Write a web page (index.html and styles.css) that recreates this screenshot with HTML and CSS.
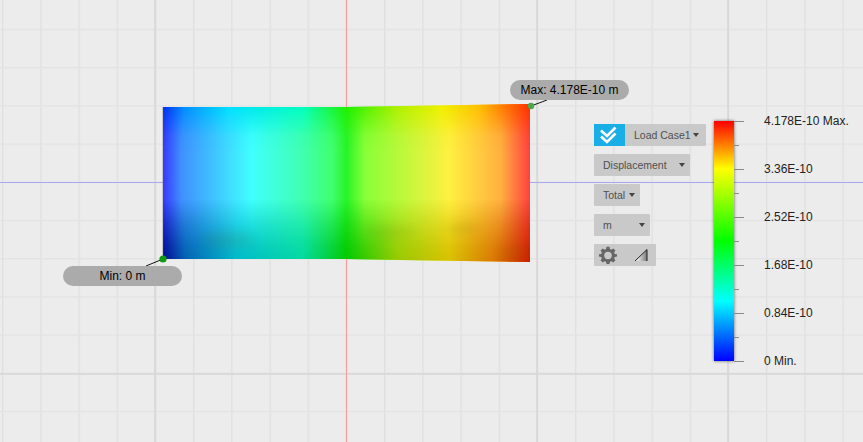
FILE: index.html
```html
<!DOCTYPE html>
<html lang="en">
<head>
<meta charset="utf-8">
<title>Displacement result</title>
<link rel="stylesheet" href="styles.css">
</head>
<body>
<main class="stage">
  <svg class="scene" width="863" height="442" viewBox="0 0 863 442" xmlns="http://www.w3.org/2000/svg">
    <defs>
      <pattern id="gv" x="2" y="0" width="38.2" height="442" patternUnits="userSpaceOnUse">
        <rect x="0" y="0" width="1.4" height="442" fill="#e0e0e0"/>
      </pattern>
      <pattern id="gh" x="0" y="28.800" width="863" height="38.2" patternUnits="userSpaceOnUse">
        <rect x="0" y="0" width="863" height="1.4" fill="#e3e3e3"/>
      </pattern>
      <linearGradient id="mid" gradientUnits="userSpaceOnUse" x1="163" y1="0" x2="530" y2="0">
        <stop offset="0" stop-color="#3838ff"/>
        <stop offset="0.05" stop-color="#4090ff"/>
        <stop offset="0.24" stop-color="#40ffff"/>
        <stop offset="0.38" stop-color="#40ffb0"/>
        <stop offset="0.46" stop-color="#40ff70"/>
        <stop offset="0.5" stop-color="#28f428"/>
        <stop offset="0.55" stop-color="#88ff38"/>
        <stop offset="0.78" stop-color="#fff040"/>
        <stop offset="0.92" stop-color="#ffb040"/>
        <stop offset="1" stop-color="#ff4040"/>
      </linearGradient>
      <linearGradient id="top" gradientUnits="userSpaceOnUse" x1="163" y1="0" x2="530" y2="0">
        <stop offset="0" stop-color="#0030f0"/>
        <stop offset="0.06" stop-color="#0090ff"/>
        <stop offset="0.18" stop-color="#00e0ff"/>
        <stop offset="0.38" stop-color="#00ffc0"/>
        <stop offset="0.5" stop-color="#20f000"/>
        <stop offset="0.64" stop-color="#b0f000"/>
        <stop offset="0.76" stop-color="#f0f000"/>
        <stop offset="0.86" stop-color="#ffc000"/>
        <stop offset="1" stop-color="#ff3000"/>
      </linearGradient>
      <linearGradient id="bot" gradientUnits="userSpaceOnUse" x1="163" y1="0" x2="530" y2="0">
        <stop offset="0" stop-color="#000a90"/>
        <stop offset="0.06" stop-color="#0060b0"/>
        <stop offset="0.2" stop-color="#00b8c8"/>
        <stop offset="0.38" stop-color="#00d8a0"/>
        <stop offset="0.5" stop-color="#00c800"/>
        <stop offset="0.64" stop-color="#98c800"/>
        <stop offset="0.78" stop-color="#d8c000"/>
        <stop offset="0.9" stop-color="#d87800"/>
        <stop offset="1" stop-color="#c82000"/>
      </linearGradient>
      <linearGradient id="fadeTop" x1="0" y1="0" x2="0" y2="1">
        <stop offset="0.02" stop-color="#fff"/>
        <stop offset="0.08" stop-color="#fff" stop-opacity="0.7"/>
        <stop offset="0.2" stop-color="#fff" stop-opacity="0.12"/>
        <stop offset="0.3" stop-color="#fff" stop-opacity="0"/>
      </linearGradient>
      <linearGradient id="fadeBot" x1="0" y1="0" x2="0" y2="1">
        <stop offset="0.6" stop-color="#fff" stop-opacity="0"/>
        <stop offset="0.76" stop-color="#fff" stop-opacity="0.5"/>
        <stop offset="0.9" stop-color="#fff" stop-opacity="0.85"/>
        <stop offset="1" stop-color="#fff"/>
      </linearGradient>
      <mask id="mTop" maskUnits="userSpaceOnUse" x="160" y="100" width="375" height="165">
        <rect x="160" y="104" width="375" height="158" fill="url(#fadeTop)"/>
      </mask>
      <mask id="mBot" maskUnits="userSpaceOnUse" x="160" y="100" width="375" height="165">
        <rect x="160" y="104" width="375" height="158" fill="url(#fadeBot)"/>
      </mask>
      <filter id="soft" x="-60%" y="-120%" width="220%" height="340%">
        <feGaussianBlur stdDeviation="5"/>
      </filter>
      <clipPath id="meshClip">
        <polygon points="163,107 346,107 530,104 530,262 400,260 346,259 163,259"/>
      </clipPath>
      <linearGradient id="tri" x1="0" y1="0" x2="1" y2="0">
        <stop offset="0.3" stop-color="#e0e0e0"/>
        <stop offset="1" stop-color="#777"/>
      </linearGradient>
    </defs>

    <rect width="863" height="442" fill="url(#gv)"/>
    <rect width="863" height="442" fill="url(#gh)"/>
    <g class="major">
      <line x1="155" y1="0" x2="155" y2="442"/>
      <line x1="537" y1="0" x2="537" y2="442"/>
      <line x1="728" y1="0" x2="728" y2="442"/>
      <line x1="0" y1="374" x2="863" y2="374"/>
    </g>
    <line class="axis-x" x1="0" y1="182.5" x2="863" y2="182.5"/>
    <line class="axis-y" x1="346.5" y1="0" x2="346.5" y2="442"/>

    <polygon points="163,107 346,107 530,104 530,262 400,260 346,259 163,259" fill="url(#mid)"/>
    <polygon points="163,107 346,107 530,104 530,262 400,260 346,259 163,259" fill="url(#top)" mask="url(#mTop)"/>
    <polygon points="163,107 346,107 530,104 530,262 400,260 346,259 163,259" fill="url(#bot)" mask="url(#mBot)"/>
    <g class="blobs" clip-path="url(#meshClip)">
      <ellipse cx="228" cy="240" rx="26" ry="8" filter="url(#soft)"/>
      <ellipse cx="390" cy="232" rx="24" ry="5" filter="url(#soft)"/>
      <ellipse cx="462" cy="228" rx="16" ry="5" filter="url(#soft)"/>
      <ellipse cx="512" cy="254" rx="14" ry="4" filter="url(#soft)"/>
    </g>
    <line class="mesh-edge" x1="163" y1="107" x2="163" y2="259"/>

    <line class="leader" x1="531" y1="106" x2="547" y2="100"/>
    <line class="leader" x1="163" y1="259" x2="146" y2="266"/>
    <circle class="pin-max" cx="531" cy="106" r="3.2"/>
    <circle class="pin-min" cx="163" cy="259" r="3.6"/>
  </svg>

  <div class="pill pill-max">Max: 4.178E-10 m</div>
  <div class="pill pill-min">Min: 0 m</div>

  <section class="controls">
    <div class="ctl ctl-load">
      <span class="check">
        <svg width="31" height="22" viewBox="0 0 31 22" xmlns="http://www.w3.org/2000/svg">
          <path class="chev" d="M7 6.500 L13 12 L21.500 3.500"/>
          <path class="chev" d="M7 12.500 L13 18 L21.500 9.500"/>
        </svg>
      </span>
      <span class="ctl-label label-load">Load Case1</span><i class="caret caret-tight"></i>
    </div>
    <div class="ctl ctl-disp"><span class="ctl-label">Displacement</span><i class="caret"></i></div>
    <div class="ctl ctl-total"><span class="ctl-label">Total</span><i class="caret"></i></div>
    <div class="ctl ctl-unit"><span class="ctl-label">m</span><i class="caret"></i></div>
    <div class="ctl ctl-tools">
      <svg class="gear" width="18" height="18" viewBox="0 0 24 24" xmlns="http://www.w3.org/2000/svg">
        <path fill-rule="evenodd" d="M10 1h4l.6 3.100 1.900.8L19.100 3.200 21.900 6l-1.700 2.600.8 1.900L24 11v3l-3 .6-.8 1.900 1.700 2.600-2.800 2.800-2.600-1.700-1.900.8L14 24h-4l-.6-3-1.900-.8-2.600 1.700L2.100 19.100l1.700-2.600-.8-1.900L0 14v-3l3-.5.800-1.900L2.100 6l2.800-2.800L7.500 4.900l1.900-.8zM12 7.500a5 5 0 1 0 0 10 5 5 0 0 0 0-10z"/>
      </svg>
      <svg class="tri" width="14" height="14" viewBox="0 0 14 14" xmlns="http://www.w3.org/2000/svg">
        <path d="M1 13 L13 1.500 V13 Z" fill="url(#tri)"/>
        <path d="M1 13 L13 1.500 V13" fill="none" stroke="#222" stroke-width="1"/>
      </svg>
    </div>
  </section>

  <section class="legend">
    <div class="ramp"></div>
    <svg class="ticks" width="12" height="242" viewBox="0 0 12 242" xmlns="http://www.w3.org/2000/svg">
      <path class="tick" d="M0 .5H10M0 48.500H10M0 96.500H10M0 144.500H10M0 192.500H10M0 240.500H10"/>
      <path class="tick tick-short" d="M0 24.500H5M0 72.500H5M0 120.500H5M0 168.500H5M0 216.500H5"/>
    </svg>
    <div class="legend-labels">
      <span>4.178E-10 Max.</span>
      <span>3.36E-10</span>
      <span>2.52E-10</span>
      <span>1.68E-10</span>
      <span>0.84E-10</span>
      <span>0 Min.</span>
    </div>
  </section>
</main>
</body>
</html>
```
FILE: styles.css
```css
* { box-sizing: border-box; }

html, body {
  margin: 0;
  padding: 0;
  background: #ececec;
  overflow: hidden;
}

.stage {
  position: relative;
  width: 863px;
  height: 442px;
  background: #ececec;
  font-family: "Liberation Sans", Arial, sans-serif;
}

.scene { position: absolute; left: 0; top: 0; display: block; }

.major line { stroke: #d6d6d6; stroke-width: 1.5; }
.axis-x { stroke: #a9a9ee; stroke-width: 1; }
.axis-y { stroke: #f4a0a0; stroke-width: 1.2; }
.mesh-edge { stroke: #555; stroke-width: 1; opacity: .5; }
.blobs ellipse { fill: #5a5a00; opacity: .1; }
.leader { stroke: #111; stroke-width: 1; }
.pin-max { fill: #49a749; }
.pin-min { fill: #139a13; }

.pill {
  position: absolute;
  width: 119px;
  height: 20px;
  border-radius: 10px;
  background: #ababab;
  color: #000;
  font-size: 12px;
  line-height: 20px;
  text-align: center;
}
.pill-max { left: 510px; top: 80px; }
.pill-min { left: 63px; top: 266px; }

.controls {
  position: absolute;
  left: 594px;
  top: 124px;
  display: flex;
  flex-direction: column;
  align-items: flex-start;
  gap: 8px;
}

.ctl {
  display: flex;
  align-items: center;
  height: 22px;
  background: #c9c9c9;
  border-radius: 1px;
  color: #505050;
  font-size: 10.500px;
}
.ctl-load { width: 112px; }
.ctl-disp { width: 96px; padding-left: 9px; }
.ctl-total { width: 46px; padding-left: 9px; }
.ctl-unit { width: 56px; padding-left: 9px; }
.ctl-tools { width: 62px; padding-left: 5px; gap: 17px; }

.check {
  display: block;
  width: 31px;
  height: 22px;
  background: #1aaee6;
}
.check svg { display: block; }
.chev { fill: none; stroke: #fff; stroke-width: 2.6; }

.ctl-label { flex: 1; white-space: nowrap; }
.label-load { padding-left: 9px; }

.caret {
  display: block;
  width: 0;
  height: 0;
  margin-right: 5px;
  border-left: 3.500px solid transparent;
  border-right: 3.500px solid transparent;
  border-top: 4px solid #444;
}
.caret-tight { margin-right: 7px; }

.gear { fill: #666; display: block; }
.tri { display: block; }

.legend {
  position: absolute;
  left: 714px;
  top: 121px;
  display: flex;
  align-items: flex-start;
}

.ramp {
  width: 20px;
  height: 240px;
  background: linear-gradient(to bottom,
    #ff0000 0%, #ffff00 20%, #00ff00 50%, #00ffff 75%, #0000ff 100%);
  box-shadow: 0 0 3px rgba(0, 0, 0, .6);
}

.ticks { display: block; }
.tick { fill: none; stroke: #8a8a8a; stroke-width: 1; }

.legend-labels {
  display: flex;
  flex-direction: column;
  justify-content: space-between;
  height: 254px;
  margin: -7px 0 0 18px;
  color: #222;
  font-size: 12px;
  line-height: 14px;
  white-space: nowrap;
}
```
